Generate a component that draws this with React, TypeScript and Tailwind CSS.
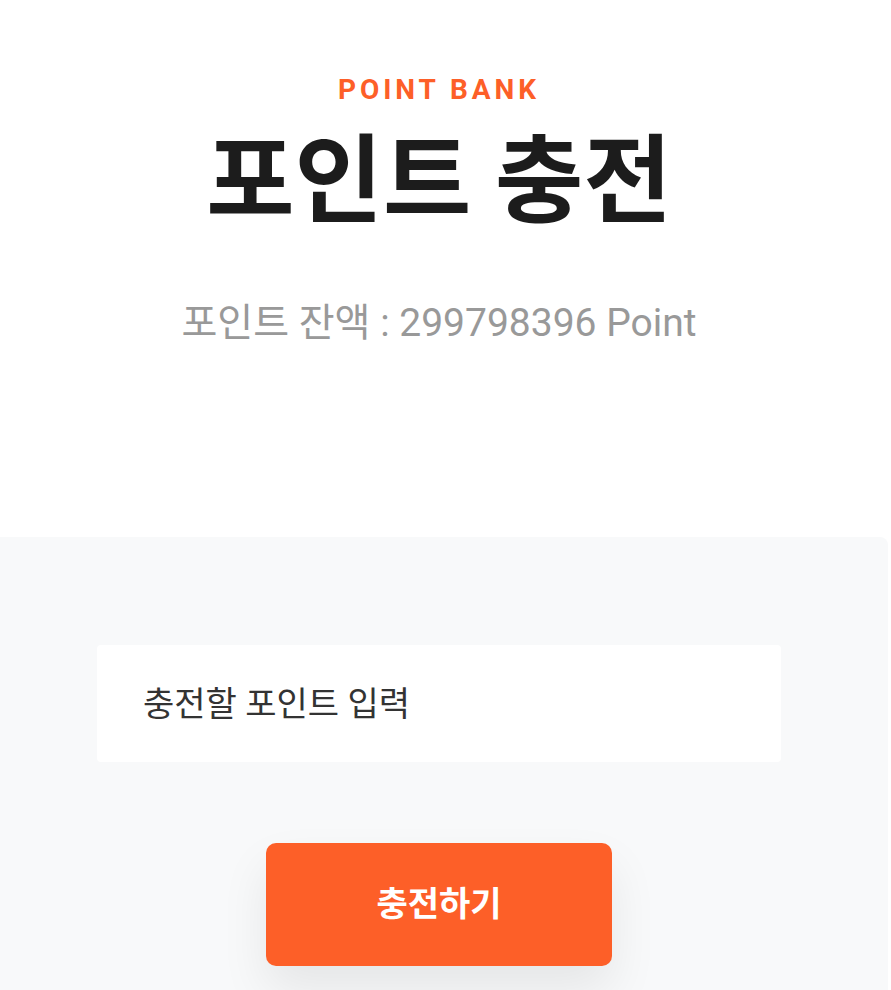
export default function App() {
  return (
    <div className="min-h-[990px] overflow-hidden bg-white font-['Roboto','Noto_Sans_CJK_KR',sans-serif]">
      <div className="w-[878px]">
        <div className="flex flex-col items-center pt-[76px]">
          <p className="text-[28px] leading-none font-bold tracking-[0.14em] text-[#fd5f28]">POINT BANK</p>
          <h1 className="mt-[29px] text-[96px] leading-none font-bold text-[#1c1c1c]">포인트 충전</h1>
          <p className="mt-[75px] text-[39px] leading-none text-[#999999]">포인트 잔액 : 299798396 Point</p>
        </div>
        <div className="-ml-[10px] mt-[194px] w-[898px] rounded-tr-lg bg-[#f8f9fa] pt-[108px] pb-[24px]">
          <div className="mx-auto flex w-[684px] flex-col items-center">
            <input
              className="h-[117px] w-full rounded-[4px] bg-white px-[46px] text-[34px] text-[#333333] outline-none placeholder:text-[#333333]"
              placeholder="충전할 포인트 입력"
            />
            <button className="mt-[81px] h-[123px] w-[346px] rounded-[10px] bg-[#fd5f28] text-[34px] font-bold text-white shadow-[0_24px_48px_rgba(0,0,0,0.08)]">
              충전하기
            </button>
          </div>
        </div>
      </div>
    </div>
  );
}
